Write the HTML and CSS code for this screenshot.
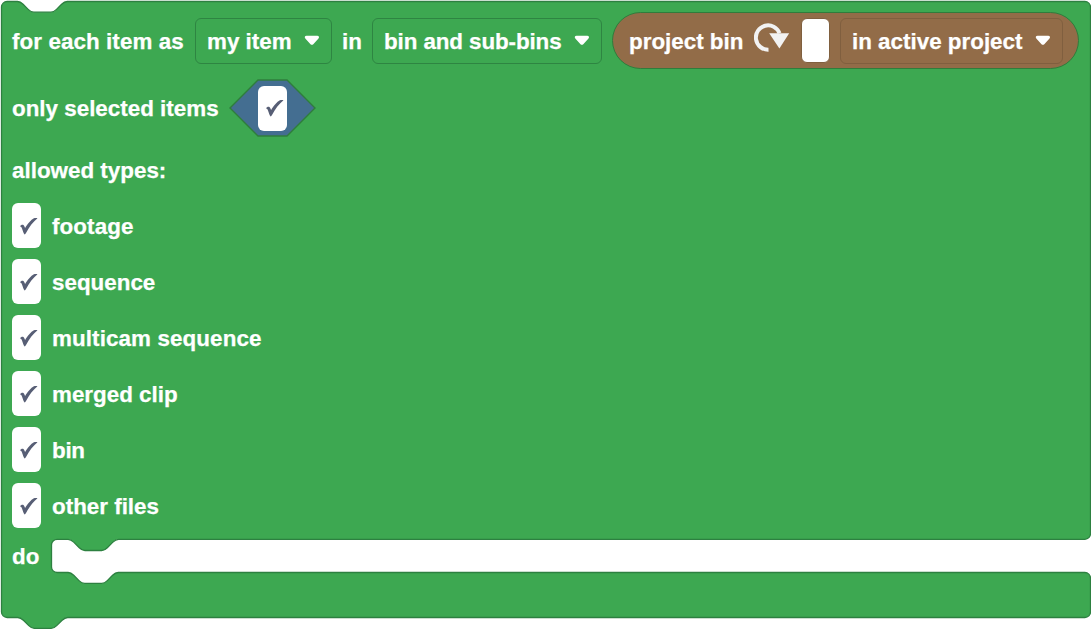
FILE: index.html
```html
<!DOCTYPE html>
<html lang="en">
<head>
<meta charset="utf-8">
<title>Block</title>
<link rel="stylesheet" href="styles.css">
</head>
<body>
<svg class="defs" width="0" height="0">
  <symbol id="arrow" viewBox="0 0 16 11"><path d="M2.500 .8H13.200C15 .8 15.600 2.300 14.500 3.500L9.300 9.200Q7.900 10.500 6.500 9.200L1.300 3.500C.2 2.300 .8 .8 2.500 .8Z"/></symbol>
  <symbol id="check" viewBox="0 0 20 18"><path d="M.9 9.300C2 7.500 4.400 7 5.200 8.900L6.100 11.100C8.500 7 12 2.800 14.900 1.300C16 .8 17.600 .8 18.500 1.200C14.200 4.700 10.200 9.800 7.300 15.600C6.700 16.800 6.200 17.300 5.600 17.400C5 17 4.700 16.300 4.300 15.200L3 11.500C2.500 10.200 1.900 9.400 .9 9.300Z"/></symbol>
</svg>
<main class="block">
  <svg class="shape" viewBox="0 0 1091 630">
    <path d="M1.500 7.100a5.600 5.600 0 0 1 5.600-5.600H17.500c2.800 0 4.200 1.400 5.600 2.800l5.100 5.100c1.400 1.400 2.800 2.800 5.600 2.800H50.900c2.800 0 4.200-1.400 5.600-2.800l5.100-5.100c1.400-1.400 2.800-2.800 5.600-2.800H1084.900a5.600 5.600 0 0 1 5.600 5.600V533.700a5.600 5.600 0 0 1-5.600 5.600H118.500c-2.800 0-4.200 1.400-5.600 2.800l-5.600 5.600c-1.400 1.400-2.800 2.800-5.600 2.800H84.900c-2.800 0-4.200-1.400-5.600-2.800l-5.600-5.600c-1.400-1.400-2.800-2.800-5.600-2.800H57.100a5.600 5.600 0 0 0-5.600 5.600V566.900a5.600 5.600 0 0 0 5.600 5.600H68.100c2.800 0 4.200 1.400 5.600 2.800l5.300 5.300c1.400 1.400 2.800 2.800 5.600 2.800H101.700c2.800 0 4.200-1.400 5.600-2.800l5.300-5.300c1.400-1.400 2.800-2.800 5.600-2.800H1084.900a5.600 5.600 0 0 1 5.600 5.600V611.900a5.600 5.600 0 0 1-5.600 5.600H67.700c-2.800 0-4.200 1.400-5.600 2.800l-5.400 5.300c-1.400 1.400-2.800 2.800-5.600 2.800H34.400c-2.800 0-4.200-1.400-5.600-2.800l-5.400-5.300c-1.400-1.400-2.800-2.800-5.600-2.800H7.100a5.600 5.600 0 0 1-5.600-5.600Z"/>
  </svg>
  <div class="content">
    <div class="row head">
      <span class="label lead">for each item as</span>
      <div class="field item"><span class="label">my item</span><svg class="arrow"><use href="#arrow"/></svg></div>
      <span class="label in">in</span>
      <div class="field scope"><span class="label">bin and sub-bins</span><svg class="arrow"><use href="#arrow"/></svg></div>
      <div class="reporter">
        <span class="label source">project bin</span>
        <svg class="reload" viewBox="0 0 36 32"><path class="arc" d="M14.500 26.700A12.200 12.200 0 1 1 25.500 10.200"/><path class="tip" d="M15.200 10.200H35.200L25.400 25.600Z"/></svg>
        <div class="input"></div>
        <div class="field project"><span class="label">in active project</span><svg class="arrow"><use href="#arrow"/></svg></div>
      </div>
    </div>
    <div class="row selected">
      <span class="label only">only selected items</span>
      <div class="boolean">
        <svg class="hex" viewBox="0 0 87 58"><path d="M29 1H58L86 29L58 57H29L1 29Z"/></svg>
        <div class="box"><svg class="check"><use href="#check"/></svg></div>
      </div>
    </div>
    <div class="row types"><span class="label allowed">allowed types:</span></div>
    <div class="row option"><div class="box"><svg class="check"><use href="#check"/></svg></div><span class="label footage">footage</span></div>
    <div class="row option"><div class="box"><svg class="check"><use href="#check"/></svg></div><span class="label">sequence</span></div>
    <div class="row option"><div class="box"><svg class="check"><use href="#check"/></svg></div><span class="label multicam">multicam sequence</span></div>
    <div class="row option"><div class="box"><svg class="check"><use href="#check"/></svg></div><span class="label">merged clip</span></div>
    <div class="row option"><div class="box"><svg class="check"><use href="#check"/></svg></div><span class="label bin">bin</span></div>
    <div class="row option"><div class="box"><svg class="check"><use href="#check"/></svg></div><span class="label">other files</span></div>
    <div class="row do"><span class="label">do</span></div>
  </div>
</main>
</body>
</html>
```
FILE: styles.css
```css
* { box-sizing: border-box; }
body {
  margin: 0;
  background: #fff;
  color: #fff;
  font: bold 22.4px/26px "Liberation Sans", Arial, sans-serif;
  white-space: nowrap;
  overflow: hidden;
}
svg { display: block; flex: none; }
.defs { position: absolute; }
.block { display: grid; width: 1091px; height: 630px; }
.shape, .content { grid-area: 1 / 1; }
.shape { width: 1091px; height: 630px; fill: #3da851; stroke: #2d8040; stroke-width: 1.3; }
.content { z-index: 1; padding: 12px 0 0 12px; }
.row { display: flex; align-items: center; }
.label { flex: none; padding-top: 2px; -webkit-text-stroke: .25px #fff; }
.head { height: 57px; }
.lead { width: 183px; letter-spacing: .08px; }
.field {
  display: flex;
  align-items: center;
  justify-content: space-between;
  flex: none;
  height: 46px;
  padding: 0 11px;
  border: 1.4px solid #2e8542;
  border-radius: 6px;
}
.arrow { width: 16px; height: 11px; fill: #fff; }
.item { width: 137px; }
.in { width: 40px; padding-left: 10px; }
.scope { width: 230px; letter-spacing: -.1px; }
.reporter {
  display: flex;
  align-items: center;
  flex: none;
  width: 467px;
  height: 57px;
  margin-left: 10px;
  padding-left: 16px;
  background: #926c48;
  border: 1.4px solid #2f7d3c;
  border-radius: 29px;
}
.source { width: 125px; }
.reload { width: 36px; height: 32px; margin: -4px 11px 0 0; }
.arc { fill: none; stroke: #f2f2f2; stroke-width: 4; }
.tip { fill: #f2f2f2; }
.input { width: 29px; height: 45px; background: #fff; border: 1px solid #80603f; border-radius: 6px; }
.project { width: 223px; margin-left: 10px; border-color: #805f3f; }
.selected { height: 78px; }
.only { width: 217px; }
.boolean { display: grid; place-items: center; width: 87px; height: 58px; }
.boolean > * { grid-area: 1 / 1; }
.boolean .box { z-index: 1; }
.hex { width: 87px; height: 58px; fill: #446e91; stroke: #2f7d3c; stroke-width: 1.4; }
.box { display: flex; align-items: center; flex: none; width: 29px; height: 45px; padding-left: 7px; background: #fff; border-radius: 6px; }
.check { width: 20px; height: 18px; fill: #575e75; }
.types { height: 47px; }
.allowed { padding-top: 0; }
.option { height: 56px; padding-top: 7px; gap: 11px; }
.footage, .multicam { letter-spacing: .1px; }
.bin { letter-spacing: -.3px; }
.do { height: 52px; }
```
